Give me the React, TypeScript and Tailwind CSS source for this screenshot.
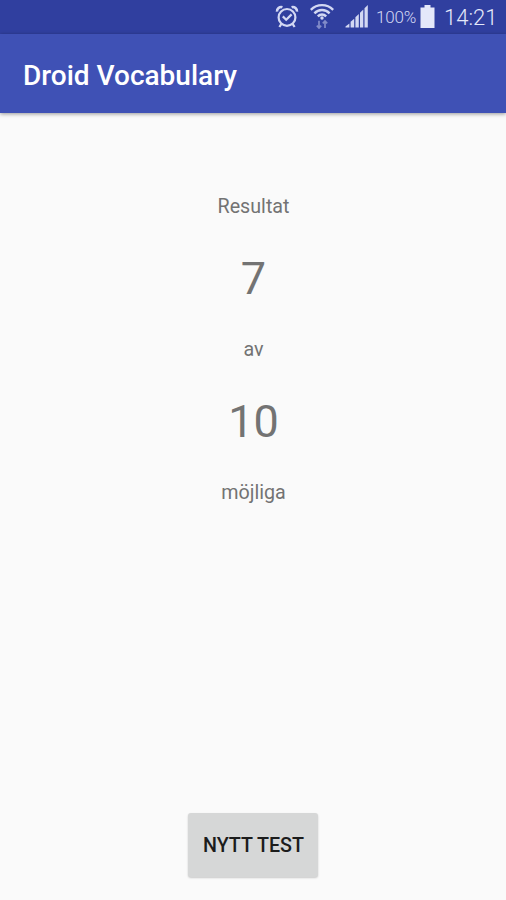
import React from 'react';

function AlarmIcon() {
  return (
    <svg className="h-6 w-6" viewBox="0 0 24 24" fill="none" stroke="currentColor" strokeWidth="2.2">
      <circle cx="12" cy="13.4" r="8.4" />
      <path d="M2 7.6C1.6 5 4.6 2.2 7.4 3.2M22 7.6C22.4 5 19.4 2.2 16.6 3.2" strokeWidth="2.6" />
      <path d="M6.4 19.8L4.4 23M17.6 19.8L19.6 23" strokeWidth="2.2" />
      <path d="M7.8 12.4L11.2 15.8L16.6 10.4" />
    </svg>
  );
}

function WifiIcon() {
  return (
    <svg className="h-[26px] w-6" viewBox="0 0 24 26" fill="none" stroke="currentColor" strokeWidth="2.4">
      <path d="M0.8 6.8C7 0.6 17 0.6 23.2 6.8" />
      <path d="M4.4 10.3C8.6 5.9 15.4 5.9 19.6 10.3" />
      <path d="M7.8 13.4C10.2 10.9 13.8 10.9 16.2 13.4" />
      <circle cx="12" cy="15" r="1.7" fill="currentColor" stroke="none" />
      <g className="opacity-50" strokeWidth="1.7">
        <path d="M9 17.8V25M6.8 22.6L9 25L11.2 22.6" />
        <path d="M15 25V17.8M12.8 20.4L15 18L17.2 20.4" />
      </g>
    </svg>
  );
}

function SignalIcon() {
  return (
    <svg className="h-6 w-6" viewBox="0 0 24 24" fill="currentColor">
      <path d="M0.5 23.5V22.5L4.4 19.4V23.5Z" />
      <path d="M5.6 23.5V17.8L9.2 14.8V23.5Z" />
      <path d="M10.4 23.5V13.2L13.8 10V23.5Z" />
      <path d="M15 23.5V8.8L18.3 5.6V23.5Z" />
      <path d="M19.5 23.5V4.2L22.8 1V23.5Z" />
    </svg>
  );
}

function BatteryIcon() {
  return (
    <svg className="h-[23px] w-[15px]" viewBox="0 0 15 23" fill="currentColor">
      <path d="M4.5 0H10.5V2.5H14.5V23H0.5V2.5H4.5Z" />
    </svg>
  );
}

function StatusBar() {
  return (
    <div className="flex h-[34px] items-start bg-[#303f9f] pl-[275px] text-[#d3d8f3]">
      <div className="pt-[4px]">
        <AlarmIcon />
      </div>
      <div className="ml-[11px] pt-[3px]">
        <WifiIcon />
      </div>
      <div className="ml-[11px] pt-[4px]">
        <SignalIcon />
      </div>
      <span className="ml-[7px] w-[44px] pt-[5px] text-[17px] leading-[24px] font-light tracking-[-0.2px]">100%</span>
      <div className="pt-[5px] text-[#e4e8fa]">
        <BatteryIcon />
      </div>
      <span className="ml-[9px] pt-[4px] text-[22px] leading-[28px] font-light text-[#e4e8fa]">14:21</span>
    </div>
  );
}

function Toolbar() {
  return (
    <header className="relative flex h-[79px] items-center bg-[#3f51b5] pt-[5px] pl-[23px] shadow-[0_1px_4px_rgba(0,0,0,0.4)]">
      <h1 className="text-[28px] leading-8 font-medium text-white">Droid Vocabulary</h1>
    </header>
  );
}

export default function App() {
  return (
    <div className="flex h-[900px] w-[506px] flex-col overflow-hidden bg-[#fafafa] font-['Roboto','Liberation_Sans',sans-serif]">
      <StatusBar />
      <Toolbar />
      <main className="flex flex-1 flex-col items-center pt-[82px] pb-[23px] text-[19.7px] text-[#737373]">
        <p className="h-6 pl-px leading-6">Resultat</p>
        <p className="mt-[34px] h-[52px] pl-px text-[45px] leading-[52px]">7</p>
        <p className="mt-[33px] h-6 pl-px leading-6">av</p>
        <p className="mt-[34px] h-[52px] pl-px text-[45px] leading-[52px]">10</p>
        <p className="mt-[33px] h-6 pl-px leading-6">möjliga</p>
        <button className="mt-auto h-[64px] w-[130px] rounded-[3px] bg-[#d6d7d7] pt-[2px] pl-px text-[19.7px] font-medium text-[#1c1c1c] shadow-[0_1px_2px_rgba(0,0,0,0.2)]">
          NYTT TEST
        </button>
      </main>
    </div>
  );
}
